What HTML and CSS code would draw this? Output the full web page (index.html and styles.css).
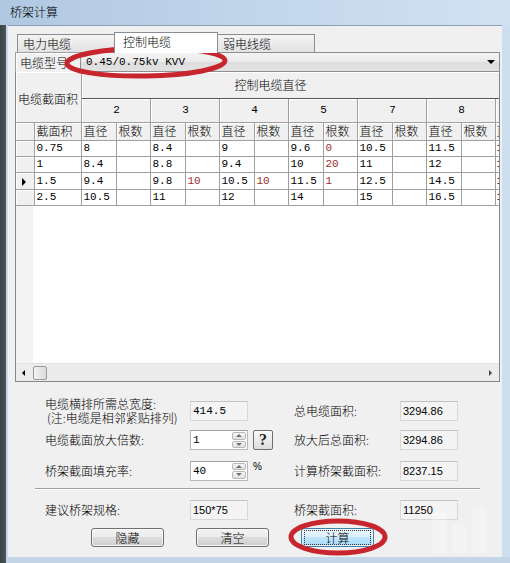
FILE: index.html
```html
<!DOCTYPE html>
<html lang="zh-CN">
<head>
    <meta charset="UTF-8">
    <title>桥架计算</title>
    <link rel="stylesheet" href="styles.css">
</head>
<body>
<div class="window">
    <div class="titlebar">桥架计算</div>

    <div class="frame">
        <div class="frame-left"></div>

        <div class="client">
            <div class="tabs">
                <div class="tab">电力电缆</div>
                <div class="tab active">控制电缆</div>
                <div class="tab">弱电线缆</div>
            </div>

            <div class="page">
                <div class="combo-row">
                    <div class="combo-label">电缆型号</div>
                    <div class="combo">
                        <span>0.45/0.75kv KVV</span>
                        <span class="combo-arrow"></span>
                    </div>
                </div>

                <div class="grid-view">
                    <table class="grid-table">
                        <colgroup>
                            <col style="width:18px">
                            <col style="width:47px">
                            <col style="width:35px"><col style="width:34px">
                            <col style="width:35px"><col style="width:34px">
                            <col style="width:35px"><col style="width:34px">
                            <col style="width:35px"><col style="width:34px">
                            <col style="width:35px"><col style="width:34px">
                            <col style="width:35px"><col style="width:34px">
                            <col style="width:4px">
                        </colgroup>
                        <thead>
                            <tr class="hd-a">
                                <th class="corner" rowspan="2" colspan="2">电缆截面积</th>
                                <th class="band" colspan="13">控制电缆直径</th>
                            </tr>
                            <tr class="hd-b">
                                <th colspan="2">2</th>
                                <th colspan="2">3</th>
                                <th colspan="2">4</th>
                                <th colspan="2">5</th>
                                <th colspan="2">7</th>
                                <th colspan="2">8</th>
                                <th class="cut"></th>
                            </tr>
                            <tr class="hd-c">
                                <th class="rh"></th>
                                <th>截面积</th>
                                <th>直径</th><th>根数</th>
                                <th>直径</th><th>根数</th>
                                <th>直径</th><th>根数</th>
                                <th>直径</th><th>根数</th>
                                <th>直径</th><th>根数</th>
                                <th>直径</th><th>根数</th>
                                <th class="cut">直</th>
                            </tr>
                        </thead>
                        <tbody id="gridBody"></tbody>
                    </table>
                    <div class="grid-fill"></div>
                    <div class="hscroll">
                        <span class="arrow-left"></span>
                        <span class="thumb"></span>
                        <span class="arrow-right"></span>
                    </div>
                </div>
            </div>

            <div class="form">
                <div class="form-row first">
                    <div class="label two-line">电缆横排所需总宽度:<br><span class="note">(注:电缆是相邻紧贴排列)</span></div>
                    <div class="field mono">414.5</div>
                    <div></div>
                    <div class="label">总电缆面积:</div>
                    <div class="field">3294.86</div>
                </div>
                <div class="form-row second">
                    <div class="label">电缆截面放大倍数:</div>
                    <div class="field spin mono"><span>1</span><span class="spin-btns"><i class="up"></i><i class="down"></i></span></div>
                    <div><button class="help">?</button></div>
                    <div class="label">放大后总面积:</div>
                    <div class="field">3294.86</div>
                </div>
                <div class="form-row third">
                    <div class="label">桥架截面填充率:</div>
                    <div class="field spin mono"><span>40</span><span class="spin-btns"><i class="up"></i><i class="down"></i></span></div>
                    <div class="unit">%</div>
                    <div class="label">计算桥架截面积:</div>
                    <div class="field">8237.15</div>
                </div>
                <div class="separator"></div>
                <div class="form-row fourth">
                    <div class="label">建议桥架规格:</div>
                    <div class="field">150*75</div>
                    <div></div>
                    <div class="label">桥架截面积:</div>
                    <div class="field">11250</div>
                </div>
                <div class="buttons">
                    <button class="btn">隐藏</button>
                    <button class="btn">清空</button>
                    <button class="btn default"><span>计算</span></button>
                </div>
            </div>
        </div>

        <div class="frame-right"></div>
    </div>
    <div class="frame-bottom"></div>

    <!-- 红圈标注 -->
    <svg class="marks" width="510" height="563" viewBox="0 0 510 563">
        <g fill="#fff" opacity="0.3">
            <rect x="432" y="513" width="15" height="40"></rect>
            <rect x="452" y="525" width="14" height="28"></rect>
            <rect x="472" y="508" width="14" height="45"></rect>
        </g>
        <ellipse cx="146" cy="62" rx="79" ry="14" transform="rotate(-1 146 62)" fill="none" stroke="#c8262e" stroke-width="5"></ellipse>
        <ellipse cx="338" cy="537" rx="47" ry="16" fill="none" stroke="#c8262e" stroke-width="5"></ellipse>
    </svg>
</div>

<script>
    // 截面积, 然后每种芯数的 [直径, 根数]
    const rows = [
        { area: '0.75', cells: [['8', ''], ['8.4', ''], ['9', ''], ['9.6', '0'], ['10.5', ''], ['11.5', '']], cut: '1' },
        { area: '1', cells: [['8.4', ''], ['8.8', ''], ['9.4', ''], ['10', '20'], ['11', ''], ['12', '']], cut: '1' },
        { area: '1.5', cells: [['9.4', ''], ['9.8', '10'], ['10.5', '10'], ['11.5', '1'], ['12.5', ''], ['14.5', '']], cut: '1', current: true },
        { area: '2.5', cells: [['10.5', ''], ['11', ''], ['12', ''], ['14', ''], ['15', ''], ['16.5', '']], cut: '1' }
    ];

    const tbody = document.getElementById('gridBody');
    rows.forEach(r => {
        const tr = document.createElement('tr');
        let html = `<th class="rh">${r.current ? '<span class="pointer"></span>' : ''}</th><td>${r.area}</td>`;
        r.cells.forEach(c => {
            html += `<td>${c[0]}</td><td class="red">${c[1]}</td>`;
        });
        html += `<td class="cut">${r.cut}</td>`;
        tr.innerHTML = html;
        tbody.appendChild(tr);
    });
</script>
</body>
</html>
```

FILE: styles.css
```css
body {
    margin: 0;
    width: 510px;
    height: 563px;
    overflow: hidden;
    font-family: "Noto Sans CJK SC", sans-serif;
    font-size: 12px;
    font-weight: 300;
    color: #000;
}
.window {
    position: relative;
    width: 510px;
    height: 563px;
    display: flex;
    flex-direction: column;
}
.titlebar {
    height: 25px;
    box-sizing: border-box;
    padding-left: 10px;
    line-height: 24px;
    background: linear-gradient(90deg, #b0c8e1, #c3d7ec 55%, #d2e2f3);
}
.frame {
    display: flex;
    height: 532px;
}
.frame-left {
    width: 8px;
    background: linear-gradient(90deg, #3b4347 0, #4a5458 6px, #c6d8eb 6px);
}
.frame-right {
    width: 8px;
    background: #cddeef;
}
.frame-bottom {
    height: 6px;
    background: linear-gradient(90deg, #3b4347 0, #4a5458 6px, #c2d5e9 6px);
}
.client {
    width: 494px;
    box-sizing: border-box;
    background: #f0f0f0;
    border-top: 1px solid #8c9fb4;
    padding: 6px 2px 0 7px;
}

/* 选项卡 */
.tabs {
    display: flex;
    align-items: flex-end;
    height: 20px;
    padding-left: 2px;
}
.tab {
    width: 98px;
    height: 18px;
    box-sizing: border-box;
    border: 1px solid #898c95;
    border-bottom: none;
    background: linear-gradient(#f4f4f4, #e2e2e2);
    padding-left: 5px;
    line-height: 17px;
}
.tab + .tab {
    margin-left: -1px;
}
.tab.active {
    width: 104px;
    height: 21px;
    margin-bottom: -1px;
    padding-left: 8px;
    line-height: 18px;
    background: #fff;
    position: relative;
    z-index: 1;
}
.page {
    width: 485px;
}
.combo-row {
    display: flex;
    height: 20px;
}
.combo-label {
    width: 65px;
    box-sizing: border-box;
    border: 1px solid #a0a0a0;
    border-right: none;
    border-bottom: none;
    box-shadow: inset 1px 1px 0 #fff;
    padding-left: 4px;
    line-height: 19px;
}
.combo {
    flex: 1;
    display: flex;
    justify-content: space-between;
    align-items: center;
    border: 1px solid #8e8f8f;
    background: linear-gradient(#f3f3f3, #ebebeb 50%, #dddddd 51%, #e2e2e2);
    padding: 0 4px 0 5px;
    font-family: "Liberation Mono", monospace;
    font-size: 11px;
}
.combo-arrow {
    width: 0;
    height: 0;
    border-left: 4px solid transparent;
    border-right: 4px solid transparent;
    border-top: 4px solid #000;
}

/* 数据表格 */
.grid-view {
    height: 310px;
    box-sizing: border-box;
    border: 1px solid #828790;
    border-top: none;
    background: #fff;
    display: flex;
    flex-direction: column;
    overflow: hidden;
}
.grid-table {
    width: 483px;
    table-layout: fixed;
    border-collapse: collapse;
}
.grid-table th,
.grid-table td {
    border: none;
    border-right: 1px solid #a0a0a0;
    border-bottom: 1px solid #a0a0a0;
    padding: 0 0 0 2px;
    white-space: nowrap;
    overflow: hidden;
    text-align: left;
    font-weight: 300;
}
.grid-table th {
    background: #f0f0f0;
    box-shadow: inset 1px 1px 0 #fff;
    line-height: 16px;
}
.hd-a {
    height: 26px;
}
.hd-b {
    height: 24px;
}
.hd-c {
    height: 18px;
}
.grid-table th.corner {
    vertical-align: middle;
    padding-top: 5px;
}
.grid-table th.band {
    padding-left: 153px;
    border-bottom: 1px solid #555;
}
.hd-b th {
    text-align: center;
    font-family: "Liberation Mono", monospace;
    font-size: 11px;
}
.grid-table tbody tr {
    height: 16px;
}
.grid-table td {
    font-family: "Liberation Mono", monospace;
    font-size: 11px;
    line-height: 14px;
}
.grid-table td.red {
    color: #9e2b2b;
}
.grid-table .cut {
    padding-left: 1px;
    border-right: none;
}
.pointer {
    display: inline-block;
    width: 0;
    height: 0;
    margin-left: 4px;
    border-top: 4px solid transparent;
    border-bottom: 4px solid transparent;
    border-left: 4px solid #000;
}
.grid-fill {
    flex: 1;
    background: linear-gradient(90deg, #f4f4f4 0 17px, #fff 17px);
}
.hscroll {
    height: 17px;
    display: flex;
    align-items: center;
    background: #ececec;
    border-top: 1px solid #e2e2e2;
}
.arrow-left {
    width: 0;
    height: 0;
    margin-left: 6px;
    border-top: 3px solid transparent;
    border-bottom: 3px solid transparent;
    border-right: 3px solid #000;
}
.thumb {
    width: 14px;
    height: 14px;
    margin-left: 8px;
    box-sizing: border-box;
    border: 1px solid #9a9a9a;
    border-radius: 2px;
    background: linear-gradient(90deg, #f2f2f2, #dadada);
}
.arrow-right {
    width: 0;
    height: 0;
    margin-left: auto;
    margin-right: 7px;
    border-top: 3px solid transparent;
    border-bottom: 3px solid transparent;
    border-left: 3px solid #444;
}

/* 下方计算结果 */
.form {
    padding-left: 30px;
}
.form-row {
    display: grid;
    grid-template-columns: 145px 58px 46px 106px 58px;
    align-items: center;
    height: 20px;
}
.form-row.first {
    height: 28px;
    margin-top: 15px;
}
.form-row.second {
    margin-top: 5px;
}
.form-row.third {
    margin-top: 10px;
    height: 21px;
}
.form-row.fourth {
    margin-top: 10px;
}
.label {
    line-height: 16px;
}
.label.two-line {
    line-height: 14px;
}
.note {
    padding-left: 2px;
}
.field {
    height: 20px;
    box-sizing: border-box;
    border: 1px solid #d8d8d8;
    border-top-color: #c2c2c2;
    background: #f4f4f4;
    padding-left: 2px;
    line-height: 18px;
    font-family: "Liberation Sans", sans-serif;
    font-size: 11px;
    font-weight: normal;
}
.field.mono {
    font-family: "Liberation Mono", monospace;
}
.spin {
    display: flex;
    justify-content: space-between;
    background: #fff;
    border-color: #b5b8bf;
    border-top-color: #9fa2a8;
    padding-right: 1px;
}
.spin-btns {
    display: flex;
    flex-direction: column;
    width: 14px;
    padding-top: 1px;
}
.spin-btns i {
    flex: 1;
    margin-bottom: 1px;
    border: 1px solid #b9b9b9;
    border-radius: 2px;
    background: linear-gradient(#f6f6f6, #e0e0e0);
    display: flex;
    align-items: center;
    justify-content: center;
}
.spin-btns i::after {
    content: "";
    border-left: 3px solid transparent;
    border-right: 3px solid transparent;
}
.spin-btns .up::after {
    border-bottom: 3px solid #6f6f6f;
}
.spin-btns .down::after {
    border-top: 3px solid #6f6f6f;
}
.help {
    display: block;
    width: 20px;
    height: 20px;
    margin-left: 5px;
    padding: 0;
    border: 1px solid #707070;
    border-radius: 2px;
    background: linear-gradient(#fafafa, #dcdcdc);
    font-family: "Liberation Serif", serif;
    font-weight: bold;
    font-size: 16px;
    line-height: 18px;
    color: #2a1c1c;
}
.unit {
    align-self: start;
    padding: 1px 0 0 5px;
    font-family: "Liberation Sans", sans-serif;
    font-size: 10px;
}
.separator {
    margin: 7px 0 0 -10px;
    width: 445px;
    height: 0;
    border-top: 1px solid #a0a0a0;
    border-bottom: 1px solid #fff;
}
.buttons {
    display: flex;
    gap: 32px;
    margin: 8px 0 0 46px;
}
.btn {
    width: 73px;
    height: 19px;
    padding: 0;
    box-sizing: border-box;
    border: 1px solid #707070;
    border-radius: 3px;
    background: linear-gradient(#f2f2f2 0, #ebebeb 50%, #dddddd 50%, #cfcfcf 100%);
    box-shadow: inset 0 0 0 1px rgba(255, 255, 255, 0.7);
    font-family: "Noto Sans CJK SC", sans-serif;
    font-size: 12px;
    font-weight: 300;
    line-height: 16px;
    color: #000;
}
.btn.default {
    border-color: #3c7fb1;
    background: linear-gradient(#eaf6fd 0, #d9f0fc 50%, #bee6fd 50%, #a7d9f5 100%);
}
.btn.default span {
    display: block;
    margin: 1px 2px;
    border: 1px dotted #333;
    line-height: 13px;
}
.marks {
    position: absolute;
    left: 0;
    top: 0;
    pointer-events: none;
}
```
